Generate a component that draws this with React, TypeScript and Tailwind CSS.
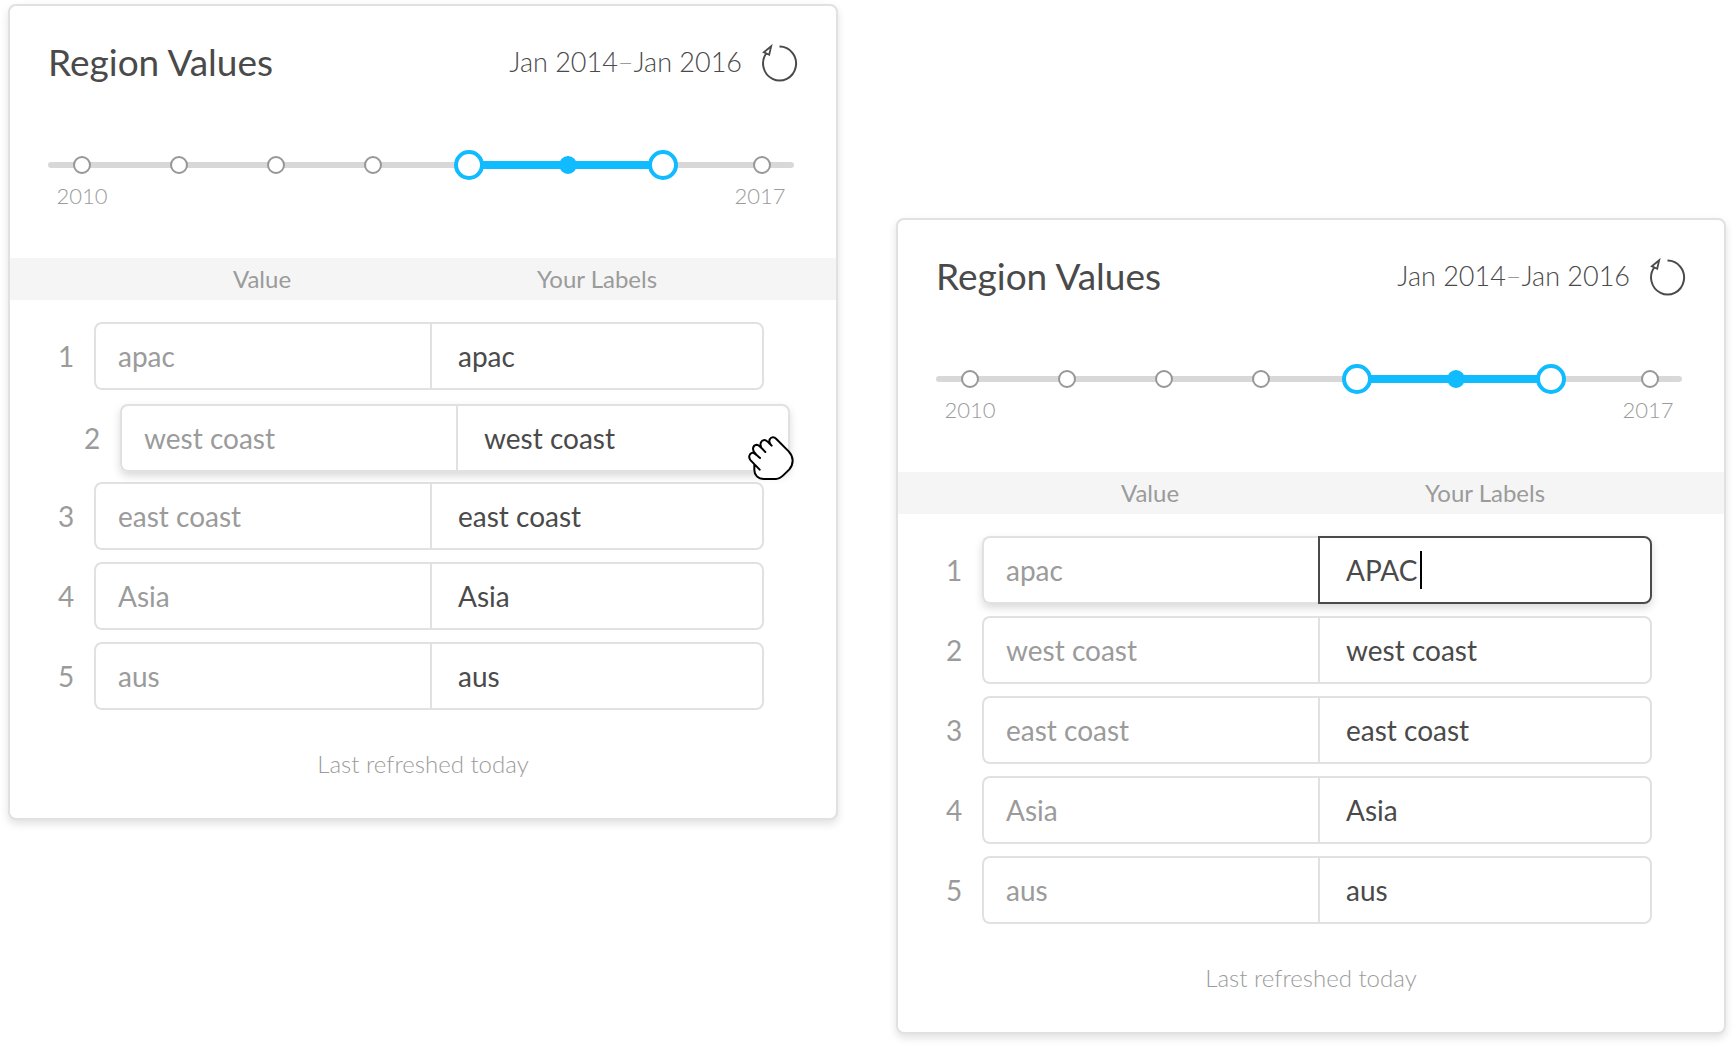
import React, { useState } from 'react';
import clsx from 'clsx';

interface Region {
  value: string;
  label: string;
}

interface RegionCardProps {
  regions: Region[];
  draggedIndex?: number;
  editingIndex?: number;
  className?: string;
}

const YEARS = [2010, 2011, 2012, 2013, 2014, 2015, 2016, 2017];
const FIRST_YEAR = YEARS[0];
const LAST_YEAR = YEARS[YEARS.length - 1];

const regions: Region[] = [
  { value: 'apac', label: 'apac' },
  { value: 'west coast', label: 'west coast' },
  { value: 'east coast', label: 'east coast' },
  { value: 'Asia', label: 'Asia' },
  { value: 'aus', label: 'aus' },
];

const editedRegions = regions.map((region, i) => (i === 0 ? { ...region, label: 'APAC' } : region));

function RefreshIcon() {
  return (
    <svg className="h-10 w-9" viewBox="0 0 36 40" fill="none" stroke="#4a4a4a" strokeWidth="2" aria-hidden="true">
      <path d="M17.5 4.5A16.5 17 0 1 1 4.6 11" />
      <path d="M9.2 4.2L1.8 10.2L7.2 12.7Z" strokeWidth="1.8" />
    </svg>
  );
}

function GrabCursor() {
  return (
    <svg className="absolute top-[29px] -right-2 h-12 w-12" viewBox="54 46 144 144" aria-hidden="true">
      <path
        d="M89 150L62 122C54 113 58 101 67 99C70 98 72 99 75 101C64 90 69 76 80 75C86 75 89 78 92 81C89 70 94 62 103 61C110 60 113 64 118 69C115 60 121 53 129 53C133 53 136 55 139 58L176 95C191 111 192 132 178 149L162 165C153 174 148 178 138 178H102C84 178 73 166 73 151V134Z"
        fill="#fff"
      />
      <path
        d="M89 150L62 122C54 113 58 101 67 99C72 98 76 102 90 115M78 104C64 92 68 76 80 75C86 75 90 80 106 97M94 84C88 72 94 62 103 61C109 60 113 66 125 78M121 73C114 62 121 53 129 53C133 53 136 55 139 58L176 95C191 111 192 132 178 149L162 165C153 174 148 178 138 178H102C84 178 73 166 73 151V134"
        fill="none"
        stroke="#000"
        strokeWidth="6"
        strokeLinecap="round"
        strokeLinejoin="round"
      />
    </svg>
  );
}

const thumbClasses =
  '[grid-area:1/1] mx-[19px] h-[30px] appearance-none bg-transparent pointer-events-none outline-none [&::-webkit-slider-thumb]:pointer-events-auto [&::-webkit-slider-thumb]:h-[30px] [&::-webkit-slider-thumb]:w-[30px] [&::-webkit-slider-thumb]:appearance-none [&::-webkit-slider-thumb]:rounded-full [&::-webkit-slider-thumb]:border-4 [&::-webkit-slider-thumb]:border-[#11bbff] [&::-webkit-slider-thumb]:bg-white';

function YearRange({ from, to, onChange }: { from: number; to: number; onChange: (from: number, to: number) => void }) {
  const span = LAST_YEAR - FIRST_YEAR;

  return (
    <div className="mt-16 mr-[42px] ml-[38px]">
      <div className="grid items-center">
        <div className="[grid-area:1/1] h-1.5 rounded-full bg-[#d8d8d8]" />
        <div className="[grid-area:1/1] mx-[34px]">
          <div
            className="h-2 bg-[#11bbff]"
            style={{
              marginLeft: `${((from - FIRST_YEAR) / span) * 100}%`,
              width: `${((to - from) / span) * 100}%`,
            }}
          />
        </div>
        <div className="[grid-area:1/1] flex justify-between pr-[23px] pl-[25px]">
          {YEARS.map((year) => (
            <span
              key={year}
              className={clsx(
                'h-[18px] w-[18px] rounded-full border-2',
                year >= from && year <= to ? 'border-[#11bbff] bg-[#11bbff]' : 'border-[#979797] bg-white'
              )}
            />
          ))}
        </div>
        <input
          type="range"
          aria-label="From year"
          min={FIRST_YEAR}
          max={LAST_YEAR}
          value={from}
          onChange={(e) => onChange(Math.min(Number(e.target.value), to), to)}
          className={thumbClasses}
        />
        <input
          type="range"
          aria-label="To year"
          min={FIRST_YEAR}
          max={LAST_YEAR}
          value={to}
          onChange={(e) => onChange(from, Math.max(Number(e.target.value), from))}
          className={thumbClasses}
        />
      </div>
      <div className="flex justify-between px-0.5 text-[22px] leading-8 font-light text-[#9b9b9b]">
        <span className="w-16 text-center">{FIRST_YEAR}</span>
        <span className="w-16 text-center">{LAST_YEAR}</span>
      </div>
    </div>
  );
}

interface RegionRowProps {
  index: number;
  region: Region;
  dragged: boolean;
  editing: boolean;
  onLabelChange: (label: string) => void;
}

function RegionRow({ index, region, dragged, editing, onLabelChange }: RegionRowProps) {
  const raised = dragged || editing;

  return (
    <tr
      className={clsx(
        'grid h-[68px] grid-cols-[84px_336fr_334fr] pr-[72px] text-[28px]',
        // the shadow sits behind both cells but leaves the row number flat
        raised &&
          "relative isolate before:absolute before:inset-y-0 before:right-[72px] before:left-[84px] before:-z-10 before:rounded-lg before:shadow-[0_4px_8px_rgba(0,0,0,0.15)] before:content-['']",
        dragged && 'z-10 translate-x-[26px] translate-y-0.5'
      )}
    >
      <td className="flex items-center justify-center pl-7 text-[#9b9b9b]">{index + 1}</td>
      <td className="flex items-center rounded-l-lg border-2 border-r-0 border-[#e1e1e1] bg-white pl-[22px] text-[#9b9b9b]">
        {region.value}
      </td>
      <td
        className={clsx(
          'relative flex min-w-0 items-center rounded-r-lg border-2 bg-white pl-[26px] text-[#4a4a4a]',
          editing ? 'border-[#4a4a4a]' : 'border-[#e1e1e1]'
        )}
      >
        <input
          type="text"
          aria-label={`Label for ${region.value}`}
          value={region.label}
          onChange={(e) => onLabelChange(e.target.value)}
          className={clsx('h-full min-w-0 outline-none', editing ? 'caret-transparent [field-sizing:content]' : 'w-full')}
        />
        {editing && <span className="ml-0.5 h-[38px] w-0.5 bg-black" />}
        {dragged && <GrabCursor />}
      </td>
    </tr>
  );
}

function RegionCard({ regions, draggedIndex, editingIndex, className }: RegionCardProps) {
  const [rows, setRows] = useState(regions);
  const [range, setRange] = useState({ from: 2014, to: 2016 });

  const updateLabel = (index: number, label: string) => {
    setRows(rows.map((row, i) => (i === index ? { ...row, label } : row)));
  };

  return (
    <section
      className={clsx(
        'min-w-0 flex-1 rounded-lg border-2 border-[#e1e1e1] bg-white pt-8 pb-[38px] shadow-[0_4px_8px_rgba(0,0,0,0.12)]',
        className
      )}
    >
      <header className="flex h-12 items-center justify-between px-[38px] text-[#4a4a4a]">
        <h2 className="text-[37px]">Region Values</h2>
        <div className="flex items-center gap-5">
          <span className="text-[27px] font-light">
            Jan {range.from}
            <span className="text-[#9b9b9b]">–</span>
            Jan {range.to}
          </span>
          <button type="button" aria-label="Refresh">
            <RefreshIcon />
          </button>
        </div>
      </header>

      <YearRange from={range.from} to={range.to} onChange={(from, to) => setRange({ from, to })} />

      <table className="mt-[46px] block">
        <thead className="block bg-[#f5f5f5]">
          <tr className="grid h-[42px] grid-cols-[84px_336fr_334fr] items-center pr-[72px] text-2xl text-[#9b9b9b]">
            <td />
            <th scope="col" className="font-normal">Value</th>
            <th scope="col" className="font-normal">Your Labels</th>
          </tr>
        </thead>
        <tbody className="flex flex-col gap-3 pt-[22px]">
          {rows.map((region, i) => (
            <RegionRow
              key={region.value}
              index={i}
              region={region}
              dragged={draggedIndex === i}
              editing={editingIndex === i}
              onLabelChange={(label) => updateLabel(i, label)}
            />
          ))}
        </tbody>
      </table>

      <p className="mt-[38px] text-center text-2xl leading-8 font-light text-[#9b9b9b]">Last refreshed today</p>
    </section>
  );
}

export default function App() {
  return (
    <main className="flex items-start gap-[58px] bg-white px-2 pt-1 pb-3 font-['Lato',sans-serif]">
      <RegionCard regions={regions} draggedIndex={1} />
      <RegionCard regions={editedRegions} editingIndex={0} className="mt-[214px]" />
    </main>
  );
}
